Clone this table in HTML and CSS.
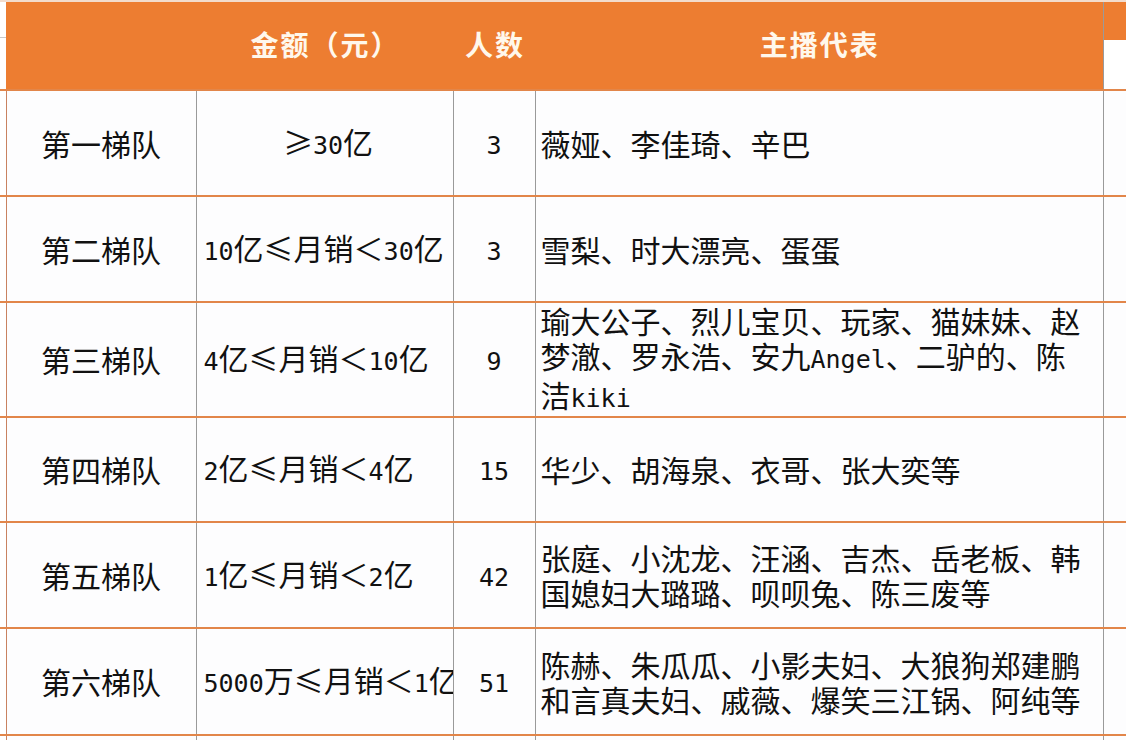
FILE: index.html
```html
<!DOCTYPE html>
<html lang="zh-CN">
<head>
<meta charset="utf-8">
<title>主播梯队</title>
<link rel="stylesheet" href="styles.css">
</head>
<body>
<table class="sheet">
  <colgroup>
    <col class="c0"><col class="c1"><col class="c2"><col class="c3"><col class="c4"><col class="c5">
  </colgroup>
  <thead>
    <tr class="head">
      <th class="edge"></th>
      <th class="h"></th>
      <th class="h">金额（元）</th>
      <th class="h">人数</th>
      <th class="h">主播代表</th>
      <th class="extra"></th>
    </tr>
  </thead>
  <tbody>
    <tr class="r1">
      <td class="edge"></td>
      <td class="tier">第一梯队</td>
      <td class="amt center">≥<span class="en">30</span>亿</td>
      <td class="num"><span class="en">3</span></td>
      <td class="names">薇娅、李佳琦、辛巴</td>
      <td class="extra"></td>
    </tr>
    <tr class="r2">
      <td class="edge"></td>
      <td class="tier">第二梯队</td>
      <td class="amt"><span class="en">10</span>亿≤月销＜<span class="en">30</span>亿</td>
      <td class="num"><span class="en">3</span></td>
      <td class="names">雪梨、时大漂亮、蛋蛋</td>
      <td class="extra"></td>
    </tr>
    <tr class="r3">
      <td class="edge"></td>
      <td class="tier">第三梯队</td>
      <td class="amt"><span class="en">4</span>亿≤月销＜<span class="en">10</span>亿</td>
      <td class="num"><span class="en">9</span></td>
      <td class="names">瑜大公子、烈儿宝贝、玩家、猫妹妹、赵梦澈、罗永浩、安九<span class="en">Angel</span>、二驴的、陈洁<span class="en">kiki</span></td>
      <td class="extra"></td>
    </tr>
    <tr class="r4">
      <td class="edge"></td>
      <td class="tier">第四梯队</td>
      <td class="amt"><span class="en">2</span>亿≤月销＜<span class="en">4</span>亿</td>
      <td class="num"><span class="en">15</span></td>
      <td class="names">华少、胡海泉、衣哥、张大奕等</td>
      <td class="extra"></td>
    </tr>
    <tr class="r5">
      <td class="edge"></td>
      <td class="tier">第五梯队</td>
      <td class="amt"><span class="en">1</span>亿≤月销＜<span class="en">2</span>亿</td>
      <td class="num"><span class="en">42</span></td>
      <td class="names">张庭、小沈龙、汪涵、吉杰、岳老板、韩国媳妇大璐璐、呗呗兔、陈三废等</td>
      <td class="extra"></td>
    </tr>
    <tr class="r6">
      <td class="edge"></td>
      <td class="tier">第六梯队</td>
      <td class="amt"><span class="en">5000</span>万≤月销＜<span class="en">1</span>亿</td>
      <td class="num"><span class="en">51</span></td>
      <td class="names">陈赫、朱瓜瓜、小影夫妇、大狼狗郑建鹏和言真夫妇、戚薇、爆笑三江锅、阿纯等</td>
      <td class="extra"></td>
    </tr>
    <tr class="r7">
      <td class="edge"></td>
      <td class="tier"></td>
      <td class="amt"></td>
      <td class="num"></td>
      <td class="names"></td>
      <td class="extra"></td>
    </tr>
  </tbody>
</table>
</body>
</html>
```

FILE: styles.css
```css
html, body {
  margin: 0;
  padding: 0;
  background: #fdfdfe;
  overflow: hidden;
}

body {
  font-family: "Noto Sans CJK SC", "Noto Sans", sans-serif;
  color: #111;
}

.sheet {
  border-collapse: collapse;
  table-layout: fixed;
  width: 1160px;
}

.c0 { width: 6px; }
.c1 { width: 190px; }
.c2 { width: 257px; }
.c3 { width: 82px; }
.c4 { width: 568px; }
.c5 { width: 57px; }

.head th {
  height: 83px;
  padding: 0 0 4px;
  border-top: 2px solid #f3dccc;
  border-bottom: 2px solid #e2864a;
}

.head .h {
  background: #ed7d31;
  color: #fff8ec;
  font-size: 28px;
  font-weight: 700;
  letter-spacing: 2px;
  text-indent: 2px;
  text-align: center;
  vertical-align: middle;
  line-height: 40px;
}

.head .edge {
  background: linear-gradient(#ffffff 0 35px, #c9c9c9 35px 36px, #ffffff 36px);
  border-right: 0;
}

.head .extra {
  background: linear-gradient(#ed7d31 0 38px, #ffffff 38px);
  border-left: 1px solid #9a9a9a;
}

tbody td {
  border-top: 2px solid #e2864a;
  border-bottom: 2px solid #e2864a;
  border-left: 1px solid #9a9a9a;
  border-right: 1px solid #9a9a9a;
  padding: 0 6px;
  font-size: 30px;
  line-height: 35px;
  vertical-align: middle;
  overflow: hidden;
  background: #fdfdfe;
}

tbody .edge {
  padding: 0;
  background: #ffffff;
  border-left: 0;
  border-right: 1px solid #c98260;
}

.r1, .r2 { height: 106px; }
.r3 { height: 114px; }
.r4 { height: 105px; }
.r5 { height: 106px; }
.r6 { height: 107px; }
.r7 { height: 30px; }

.tier {
  text-align: center;
}

.amt {
  white-space: nowrap;
  text-align: left;
  padding-left: 7px;
  padding-right: 0;
}

.amt.center {
  text-align: center;
}

.num {
  text-align: center;
}

.names {
  padding-left: 5px;
  padding-right: 20px;
  text-align: left;
}

.en {
  font-family: "DejaVu Sans Mono", "Liberation Mono", monospace;
  font-size: 25px;
}

.extra {
  padding: 0;
}
```
